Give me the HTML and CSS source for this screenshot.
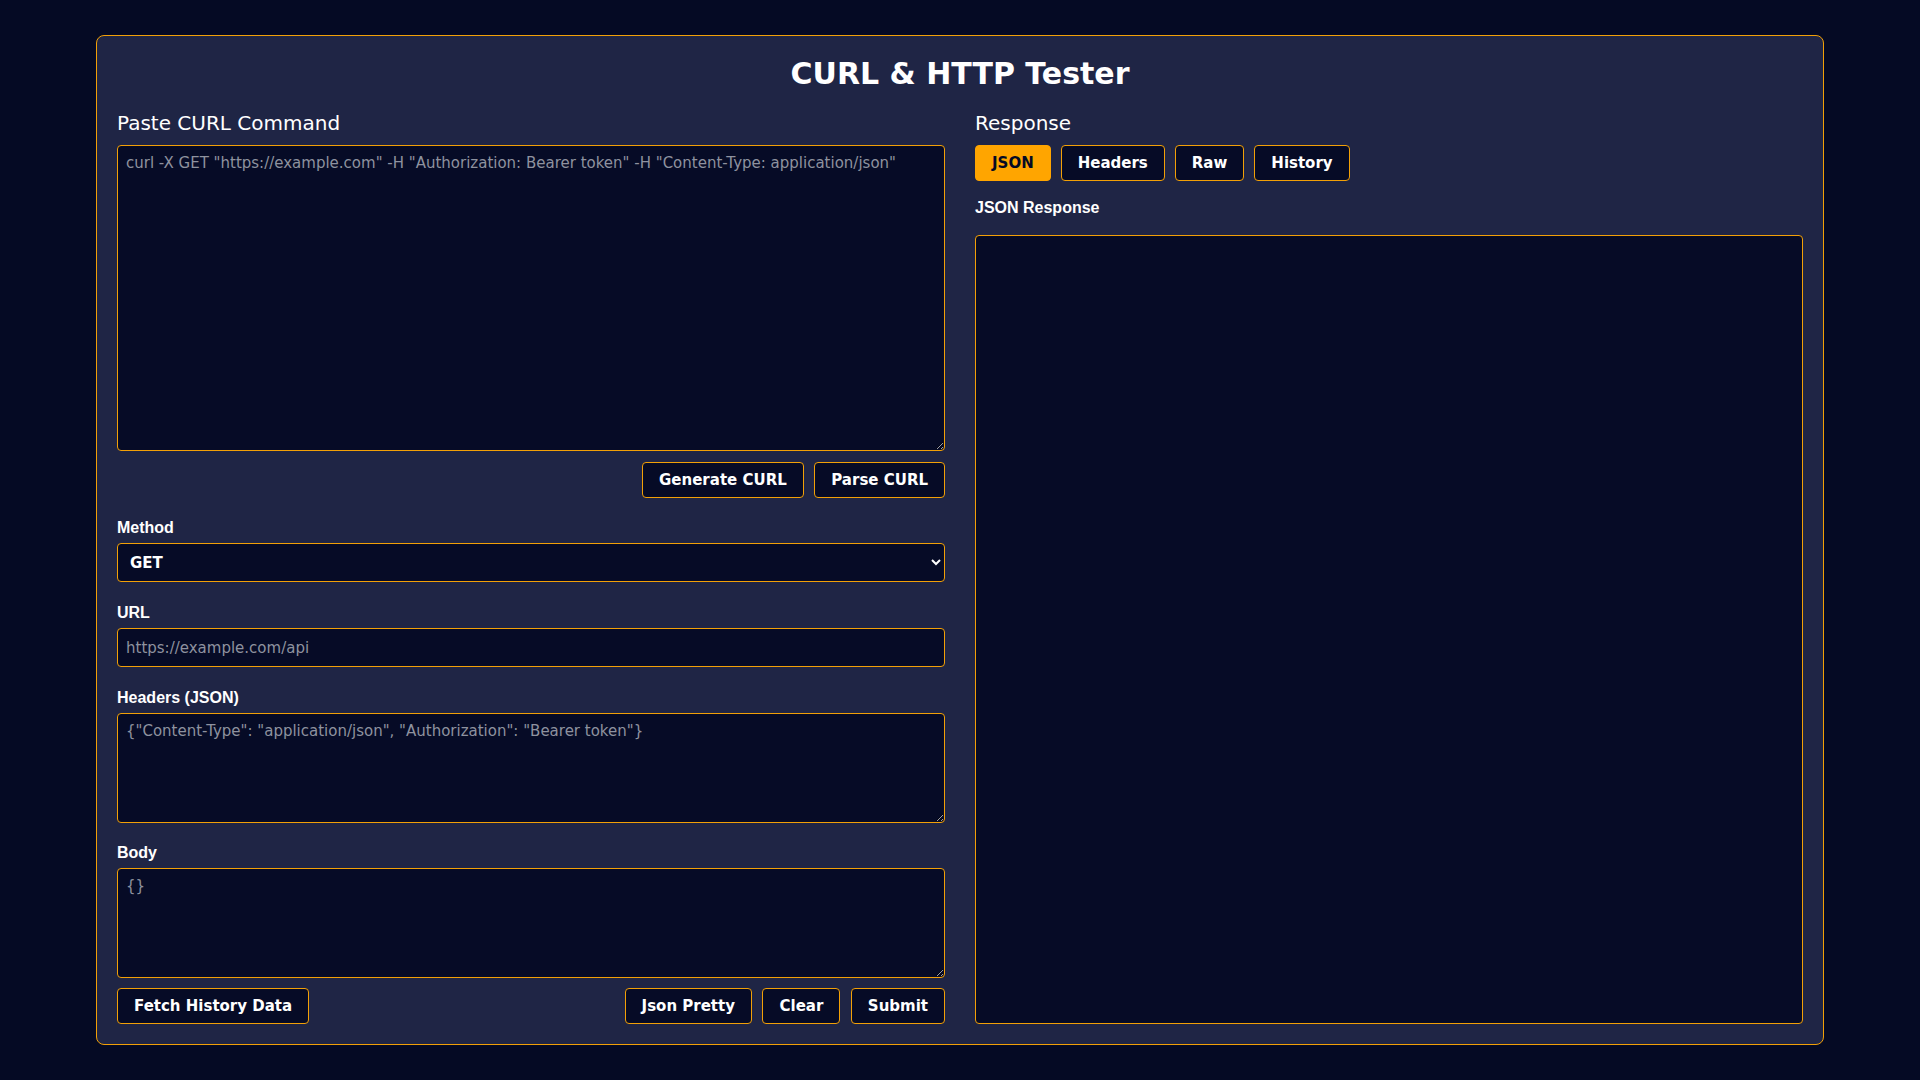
FILE: index.html
```html
<!DOCTYPE html>
<html lang="en">
<head>
<meta charset="utf-8">
<title>CURL &amp; HTTP Tester</title>
<link rel="stylesheet" href="styles.css">
</head>
<body>
<div class="card">
  <h1 class="title">CURL &amp; HTTP Tester</h1>
  <div class="columns">
    <div class="col left">
      <h3 class="section-title">Paste CURL Command</h3>
      <textarea class="field curl-input" placeholder="curl -X GET &quot;https://example.com&quot; -H &quot;Authorization: Bearer token&quot; -H &quot;Content-Type: application/json&quot;"></textarea>
      <div class="btn-row end">
        <button class="btn">Generate CURL</button>
        <button class="btn">Parse CURL</button>
      </div>
      <div class="group">
        <label class="label">Method</label>
        <select class="field select">
          <option>GET</option>
          <option>POST</option>
          <option>PUT</option>
          <option>PATCH</option>
          <option>DELETE</option>
        </select>
      </div>
      <div class="group">
        <label class="label">URL</label>
        <input class="field input" type="text" placeholder="https://example.com/api">
      </div>
      <div class="group">
        <label class="label">Headers (JSON)</label>
        <textarea class="field small-area" placeholder="{&quot;Content-Type&quot;: &quot;application/json&quot;, &quot;Authorization&quot;: &quot;Bearer token&quot;}"></textarea>
      </div>
      <div class="group last">
        <label class="label">Body</label>
        <textarea class="field small-area" placeholder="{}"></textarea>
      </div>
      <div class="btn-row between">
        <button class="btn">Fetch History Data</button>
        <div class="btn-group">
          <button class="btn">Json Pretty</button>
          <button class="btn">Clear</button>
          <button class="btn">Submit</button>
        </div>
      </div>
    </div>
    <div class="col right">
      <h3 class="section-title">Response</h3>
      <div class="tabs">
        <button class="btn active">JSON</button>
        <button class="btn">Headers</button>
        <button class="btn">Raw</button>
        <button class="btn">History</button>
      </div>
      <label class="label resp-label">JSON Response</label>
      <div class="response"></div>
    </div>
  </div>
</div>
</body>
</html>
```

FILE: styles.css
```css
* {
  box-sizing: border-box;
}

html, body {
  margin: 0;
  padding: 0;
}

body {
  background: #050a24;
  color: #ffffff;
  font-family: "DejaVu Sans", sans-serif;
  font-size: 15px;
  padding: 35px 96px 0;
  color-scheme: dark;
}

.card {
  background: #1f2545;
  border: 1px solid #f2a007;
  border-radius: 8px;
  padding: 20px;
}

.title {
  margin: 0 0 20px;
  text-align: center;
  font-size: 30px;
  font-weight: bold;
  line-height: normal;
}

.columns {
  display: grid;
  grid-template-columns: 1fr 1fr;
  gap: 30px;
}

.col {
  display: flex;
  flex-direction: column;
  min-width: 0;
}

.section-title {
  margin: 0 0 10px;
  font-size: 20px;
  font-weight: normal;
  line-height: normal;
}

.field {
  display: block;
  width: 100%;
  background: #060b26;
  color: #ffffff;
  border: 1px solid #f2a007;
  border-radius: 4px;
  font-family: "DejaVu Sans", sans-serif;
  font-size: 15px;
  padding: 8px;
  outline: none;
}

.field::placeholder {
  color: #8e929f;
  opacity: 1;
}

textarea.field {
  resize: vertical;
  line-height: normal;
}

.curl-input {
  height: 306px;
}

.small-area {
  height: 109.5px;
}

.select {
  height: 39.5px;
  padding: 0 8px;
  font-weight: bold;
}

.input {
  height: 39px;
  padding: 0 8px;
}

.btn-row {
  display: flex;
  gap: 10.5px;
  margin-top: 10.5px;
}

.btn-row.end {
  justify-content: flex-end;
  margin-bottom: 21px;
}

.btn-row.between {
  justify-content: space-between;
}

.btn-group {
  display: flex;
  gap: 10.5px;
}

.btn {
  background: #060b26;
  color: #ffffff;
  border: 1px solid #f2a007;
  border-radius: 4px;
  padding: 8px 16px;
  font-family: "DejaVu Sans", sans-serif;
  font-size: 15px;
  font-weight: bold;
  line-height: normal;
  cursor: pointer;
}

.btn.active {
  background: #ffa500;
  border-color: #ffa500;
  color: #050a24;
}

.group {
  margin-bottom: 21.6px;
}

.group.last {
  margin-bottom: 0;
}

.label {
  display: block;
  margin-bottom: 6.3px;
  font-family: "Liberation Sans", Arial, sans-serif;
  font-size: 16px;
  font-weight: bold;
  line-height: normal;
}

.tabs {
  display: flex;
  gap: 10px;
  margin-bottom: 18px;
}

.resp-label {
  margin-bottom: 18px;
}

.response {
  flex: 1;
  background: #060b26;
  border: 1px solid #f2a007;
  border-radius: 4px;
}
```
